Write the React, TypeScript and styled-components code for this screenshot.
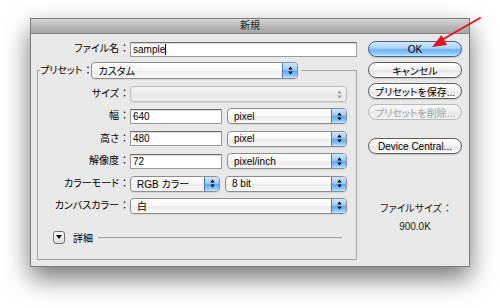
import React from "react";
import styled, { createGlobalStyle } from "styled-components";

const Global = createGlobalStyle`
  html, body { margin: 0; padding: 0; background: #ffffff; }
  body {
    font-family: "Liberation Sans", "Noto Sans CJK JP", sans-serif;
    font-size: 10px;
    color: #000;
    font-feature-settings: "palt";
  }
`;

const Page = styled.div`
  position: relative;
  width: 500px;
  height: 308px;
  box-sizing: border-box;
  padding: 18px 0 0 30px;
  overflow: hidden;
`;

const Window = styled.div`
  width: 440px;
  height: 249px;
  box-sizing: border-box;
  border: 1px solid #7b7b7b;
  background: #e8e8e8;
  box-shadow: 0 11px 24px rgba(0, 0, 0, 0.55);
  display: flex;
  flex-direction: column;
`;

const TitleBar = styled.div`
  height: 15px;
  box-sizing: border-box;
  border-bottom: 1px solid #7e7e7e;
  background: linear-gradient(#d6d6d6, #b4b4b4 60%, #a6a6a6);
  text-align: center;
  font-size: 10px;
  line-height: 14px;
  color: #1c1c1c;
`;

const Body = styled.div`
  flex: 1;
  display: flex;
  gap: 11px;
  padding: 7px 7px 0 6px;
`;

const LeftCol = styled.div`
  width: 320px;
  display: flex;
  flex-direction: column;
`;

const RightCol = styled.div`
  width: 94px;
  display: flex;
  flex-direction: column;
`;

const FormRow = styled.div<{ $label: number }>`
  display: grid;
  grid-template-columns: ${(p) => p.$label}px 1fr;
  column-gap: 3px;
  align-items: center;
  height: 16px;
`;

const Label = styled.span`
  text-align: right;
  white-space: nowrap;
  line-height: 16px;
`;

const Colon = styled.span`
  margin-left: 3px;
`;

const Fields = styled.div`
  display: flex;
  gap: 5px;
  align-items: center;
`;

const TextField = styled.div<{ $w: number }>`
  width: ${(p) => p.$w}px;
  height: 15px;
  box-sizing: border-box;
  background: #fff;
  border: 1px solid #9a9a9a;
  border-top-color: #6e6e6e;
  box-shadow: inset 0 1px 0 #d8d8d8;
  padding-left: 2px;
  line-height: 13px;
  display: flex;
  align-items: center;
`;

const Caret = styled.span`
  display: inline-block;
  width: 1px;
  height: 11px;
  background: #000;
`;

const Group = styled.fieldset`
  margin: 5px 0 0 0;
  padding: 0 9px 14px 0;
  border: 1px solid #a4a4a4;
  min-width: 0;
  display: flex;
  flex-direction: column;
`;

const Legend = styled.legend`
  margin-left: 2px;
  padding: 0 3px 0 0;
  display: flex;
  align-items: center;
  gap: 1px;
`;

const Rows = styled.div`
  margin-top: 7px;
  display: flex;
  flex-direction: column;
  gap: 6.4px;
`;

const Popup = styled.div<{ $w: number; $h?: number; $disabled?: boolean }>`
  width: ${(p) => p.$w}px;
  height: ${(p) => p.$h ?? 16}px;
  box-sizing: border-box;
  display: flex;
  align-items: stretch;
  border: 1px solid ${(p) => (p.$disabled ? "#bcbcbc" : "#8c8c8c")};
  border-radius: 4px;
  overflow: hidden;
  background: ${(p) =>
    p.$disabled
      ? "linear-gradient(#f3f3f3, #ececec 50%, #e6e6e6 51%, #efefef)"
      : "linear-gradient(#ffffff, #f7f7f7 50%, #ebebeb 51%, #f8f8f8)"};
  box-shadow: 0 1px 0 rgba(0, 0, 0, 0.08);
`;

const PopupText = styled.span`
  flex: 1;
  padding-left: 6px;
  display: flex;
  align-items: center;
  white-space: nowrap;
`;

const PopupCap = styled.span<{ $disabled?: boolean }>`
  width: 14px;
  display: flex;
  align-items: center;
  justify-content: center;
  border-left: 1px solid ${(p) => (p.$disabled ? "transparent" : "#4b78b8")};
  background: ${(p) =>
    p.$disabled
      ? "transparent"
      : "linear-gradient(#cfe6fc, #9bcaf6 45%, #5fa6ef 55%, #8dcbfb 85%, #c1e5ff)"};
`;

const Disclosure = styled.div`
  display: flex;
  align-items: center;
  margin-top: 16px;
  padding-left: 15px;
`;

const DiscButton = styled.div`
  width: 12px;
  height: 13px;
  box-sizing: border-box;
  border: 1px solid #6e6e6e;
  border-radius: 3px;
  background: linear-gradient(#ffffff, #ececec 55%, #dcdcdc);
  display: flex;
  align-items: center;
  justify-content: center;
`;

const DiscLabel = styled.span`
  margin-left: 8px;
`;

const Rule = styled.div`
  flex: 1;
  height: 1px;
  background: #9c9c9c;
  margin: 0 5px 0 5px;
`;

const PushButton = styled.div<{ $kind?: "default" | "normal" | "disabled"; $mt?: number }>`
  height: 16px;
  box-sizing: border-box;
  margin-top: ${(p) => p.$mt ?? 0}px;
  border-radius: 8px;
  display: flex;
  align-items: center;
  justify-content: center;
  white-space: nowrap;
  border: 1px solid
    ${(p) => (p.$kind === "default" ? "#3e6296" : p.$kind === "disabled" ? "#b9b9b9" : "#5e5e5e")};
  color: ${(p) => (p.$kind === "disabled" ? "#a2a2a2" : "#000")};
  background: ${(p) =>
    p.$kind === "default"
      ? "linear-gradient(#d6eafd, #a9d1f7 45%, #6eb3f3 55%, #8fcbfb 85%, #cdeeff)"
      : p.$kind === "disabled"
      ? "linear-gradient(#f6f6f6, #eeeeee 50%, #e8e8e8 51%, #f1f1f1)"
      : "linear-gradient(#ffffff, #f5f5f5 45%, #e4e4e4 55%, #f4f4f4 85%, #ffffff)"};
  box-shadow: ${(p) => (p.$kind === "disabled" ? "none" : "0 1px 1px rgba(0,0,0,0.15)")};
`;

const Info = styled.div`
  margin-top: 49px;
  display: flex;
  flex-direction: column;
  align-items: center;
  gap: 6px;
  line-height: 12px;
  color: #1a1a1a;
`;

const ArrowLayer = styled.svg`
  position: absolute;
  left: 0;
  top: 0;
  pointer-events: none;
`;

const Updown = ({ color = "#000" }: { color?: string }) => (
  <svg width="5" height="9" viewBox="0 0 5 9">
    <path d="M0.3 3.6 L2.5 0.6 L4.7 3.6 Z" fill={color} />
    <path d="M0.3 5.4 L2.5 8.4 L4.7 5.4 Z" fill={color} />
  </svg>
);

const Select = ({ w, text, h }: { w: number; text: string; h?: number }) => (
  <Popup $w={w} $h={h}>
    <PopupText>{text}</PopupText>
    <PopupCap>
      <Updown />
    </PopupCap>
  </Popup>
);

const L = ({ children }: { children: string }) => (
  <Label>
    {children}
    <Colon>：</Colon>
  </Label>
);

export default function App() {
  return (
    <>
      <Global />
      <Page>
        <Window>
          <TitleBar>新規</TitleBar>
          <Body>
            <LeftCol>
              <FormRow $label={90}>
                <L>ファイル名</L>
                <TextField $w={227}>
                  sample
                  <Caret />
                </TextField>
              </FormRow>
              <Group>
                <Legend>
                  <L>プリセット</L>
                  <Select w={207} h={17} text="カスタム" />
                </Legend>
                <Rows>
                  <FormRow $label={89}>
                    <L>サイズ</L>
                    <Popup $w={217} $disabled>
                      <PopupText />
                      <PopupCap $disabled>
                        <Updown color="#9a9a9a" />
                      </PopupCap>
                    </Popup>
                  </FormRow>
                  <FormRow $label={89}>
                    <L>幅</L>
                    <Fields>
                      <TextField $w={92}>640</TextField>
                      <Select w={120} text="pixel" />
                    </Fields>
                  </FormRow>
                  <FormRow $label={89}>
                    <L>高さ</L>
                    <Fields>
                      <TextField $w={92}>480</TextField>
                      <Select w={120} text="pixel" />
                    </Fields>
                  </FormRow>
                  <FormRow $label={89}>
                    <L>解像度</L>
                    <Fields>
                      <TextField $w={92}>72</TextField>
                      <Select w={120} text="pixel/inch" />
                    </Fields>
                  </FormRow>
                  <FormRow $label={89}>
                    <L>カラーモード</L>
                    <Fields>
                      <Select w={90} text="RGB カラー" />
                      <Select w={122} text="8 bit" />
                    </Fields>
                  </FormRow>
                  <FormRow $label={89}>
                    <L>カンバスカラー</L>
                    <Select w={217} text="白" />
                  </FormRow>
                </Rows>
                <Disclosure>
                  <DiscButton>
                    <svg width="6" height="4" viewBox="0 0 6 4">
                      <path d="M0 0 L6 0 L3 4 Z" fill="#000" />
                    </svg>
                  </DiscButton>
                  <DiscLabel>詳細</DiscLabel>
                  <Rule />
                </Disclosure>
              </Group>
            </LeftCol>
            <RightCol>
              <PushButton $kind="default">OK</PushButton>
              <PushButton $mt={5}>キャンセル</PushButton>
              <PushButton $mt={5}>プリセットを保存...</PushButton>
              <PushButton $mt={5} $kind="disabled">
                プリセットを削除...
              </PushButton>
              <PushButton $mt={18}>Device Central...</PushButton>
              <Info>
                <span>
                  ファイルサイズ<Colon>：</Colon>
                </span>
                <span>900.0K</span>
              </Info>
            </RightCol>
          </Body>
        </Window>
        <ArrowLayer width="500" height="308" viewBox="0 0 500 308">
          <line x1="480" y1="18" x2="440" y2="41" stroke="#e3141b" strokeWidth="2" strokeLinecap="round" />
          <polygon points="432,47 441.5,35 447,45" fill="#e3141b" />
        </ArrowLayer>
      </Page>
    </>
  );
}
